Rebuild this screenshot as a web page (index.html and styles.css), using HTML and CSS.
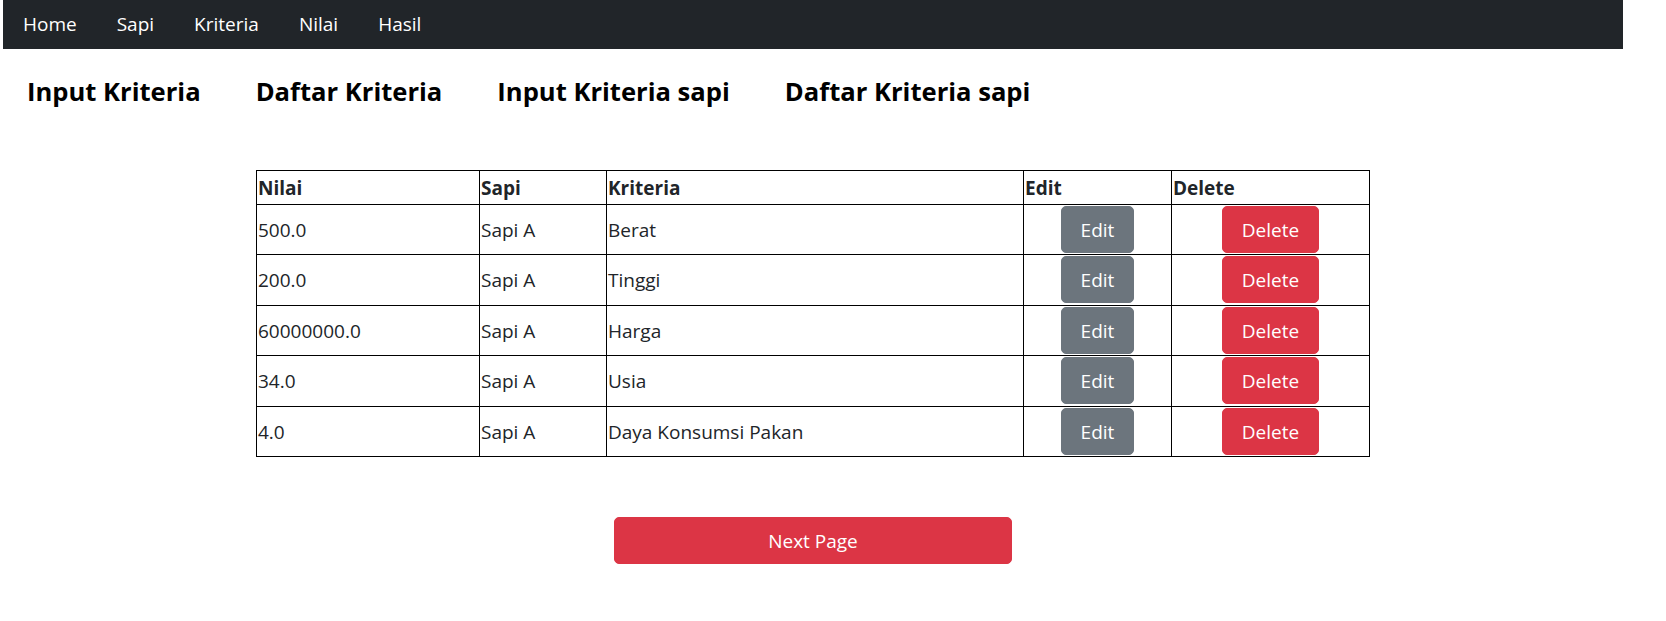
FILE: index.html
```html
<!DOCTYPE html>
<html lang="id">
<head>
<meta charset="utf-8">
<title>Daftar Kriteria sapi</title>
<link rel="stylesheet" href="styles.css">
</head>
<body>
<div class="page">
  <nav class="topnav">
    <a href="#">Home</a>
    <a href="#">Sapi</a>
    <a href="#">Kriteria</a>
    <a href="#">Nilai</a>
    <a href="#">Hasil</a>
  </nav>
  <div class="menu">
    <a href="#" class="menu-link">Input Kriteria</a>
    <a href="#" class="menu-link">Daftar Kriteria</a>
    <a href="#" class="menu-link">Input Kriteria sapi</a>
    <a href="#" class="menu-link">Daftar Kriteria sapi</a>
  </div>
  <table class="data">
    <colgroup>
      <col class="c-nilai">
      <col class="c-sapi">
      <col class="c-kriteria">
      <col class="c-edit">
      <col class="c-delete">
    </colgroup>
    <thead>
      <tr><th>Nilai</th><th>Sapi</th><th>Kriteria</th><th>Edit</th><th>Delete</th></tr>
    </thead>
    <tbody>
      <tr><td>500.0</td><td>Sapi A</td><td>Berat</td><td class="act"><button class="btn btn-secondary">Edit</button></td><td class="act"><button class="btn btn-danger">Delete</button></td></tr>
      <tr><td>200.0</td><td>Sapi A</td><td>Tinggi</td><td class="act"><button class="btn btn-secondary">Edit</button></td><td class="act"><button class="btn btn-danger">Delete</button></td></tr>
      <tr><td>60000000.0</td><td>Sapi A</td><td>Harga</td><td class="act"><button class="btn btn-secondary">Edit</button></td><td class="act"><button class="btn btn-danger">Delete</button></td></tr>
      <tr><td>34.0</td><td>Sapi A</td><td>Usia</td><td class="act"><button class="btn btn-secondary">Edit</button></td><td class="act"><button class="btn btn-danger">Delete</button></td></tr>
      <tr><td>4.0</td><td>Sapi A</td><td>Daya Konsumsi Pakan</td><td class="act"><button class="btn btn-secondary">Edit</button></td><td class="act"><button class="btn btn-danger">Delete</button></td></tr>
    </tbody>
  </table>
  <div class="next-wrap">
    <button class="btn btn-danger btn-next">Next Page</button>
  </div>
</div>
</body>
</html>
```

FILE: styles.css
```css
* { box-sizing: border-box; }
html, body {
  margin: 0;
  padding: 0;
  background: #fff;
}
body {
  font-family: "Open Sans", "Noto Sans", sans-serif;
  font-size: 19px;
  line-height: 1.5;
  color: #212529;
}
.page {
  width: 1620px;
  margin-left: 3px;
}
.topnav {
  display: flex;
  height: 49px;
  background: #212529;
}
.topnav a {
  display: block;
  padding: 0 20px;
  line-height: 49px;
  color: #fff;
  text-decoration: none;
  font-size: 19px;
}
.menu {
  display: flex;
  gap: 55px;
  margin-top: 26px;
  padding-left: 24px;
}
.menu-link {
  font-size: 25.6px;
  font-weight: 700;
  line-height: 34px;
  color: #000;
  text-decoration: none;
}
.data {
  margin: 61px auto 0;
  width: 1113px;
  table-layout: fixed;
  border-collapse: collapse;
  font-size: 19px;
}
.c-nilai { width: 223px; }
.c-sapi { width: 127px; }
.c-kriteria { width: 417px; }
.c-edit { width: 148px; }
.c-delete { width: 198px; }
.data th, .data td {
  border: 1px solid #000;
  padding: 1px;
  text-align: left;
  vertical-align: middle;
  line-height: 30px;
}
.data th {
  font-weight: 700;
  padding-top: 2px;
}
.data tbody tr:nth-child(even) td { padding-bottom: 2px; }
.data td.act { text-align: center; }
.btn {
  display: inline-block;
  font-family: inherit;
  font-size: 19px;
  line-height: 30px;
  padding: 7.5px 18.5px;
  border: 1px solid transparent;
  border-radius: 5px;
  color: #fff;
  cursor: pointer;
  vertical-align: middle;
}
.btn-secondary { background: #6c757d; border-color: #6c757d; }
.btn-danger { background: #dc3545; border-color: #dc3545; }
.next-wrap {
  display: flex;
  justify-content: center;
  margin-top: 60px;
}
.btn-next {
  width: 398px;
  padding: 7.5px 15px;
}
```
